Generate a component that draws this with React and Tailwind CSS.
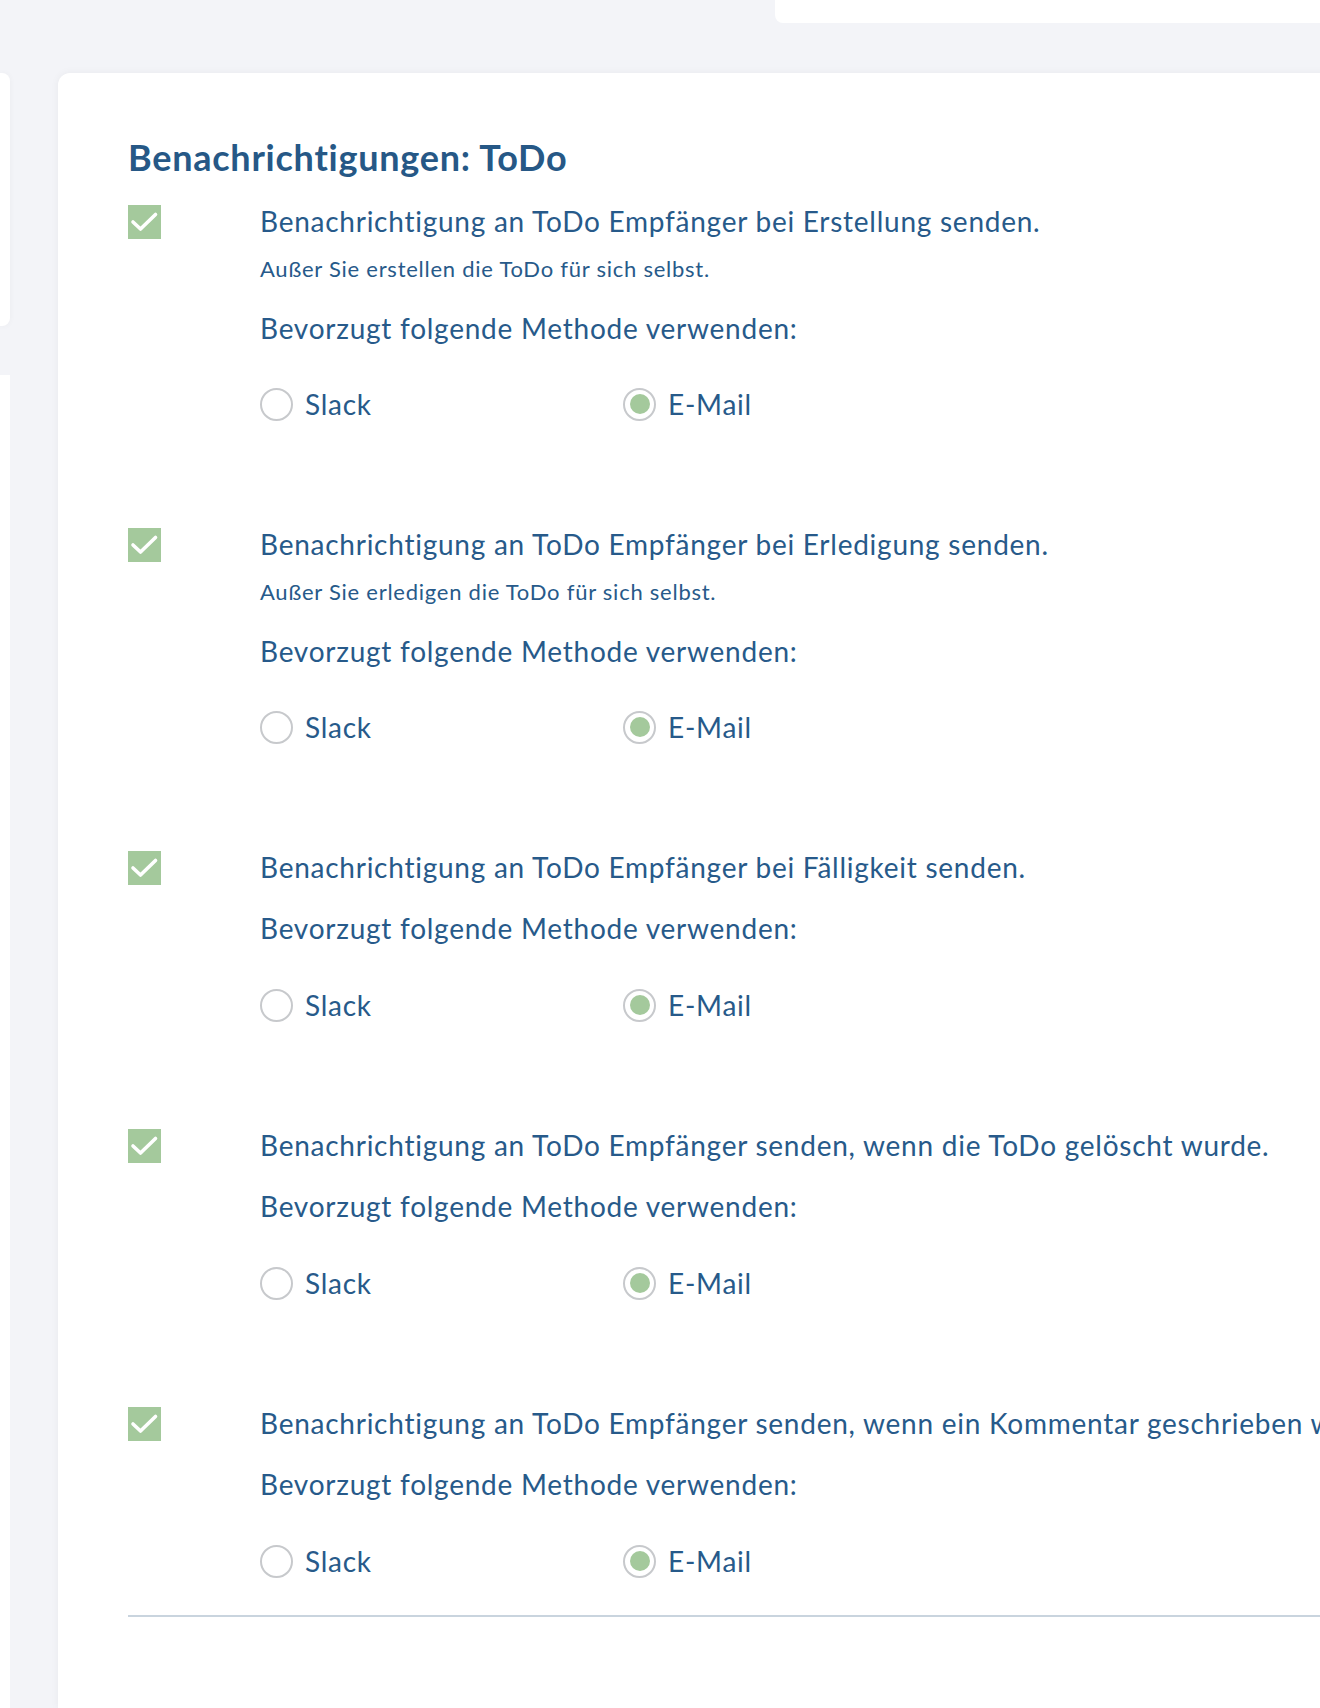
import React from "react";

const rows = [
  {
    label: "Benachrichtigung an ToDo Empfänger bei Erstellung senden.",
    sub: "Außer Sie erstellen die ToDo für sich selbst.",
  },
  {
    label: "Benachrichtigung an ToDo Empfänger bei Erledigung senden.",
    sub: "Außer Sie erledigen die ToDo für sich selbst.",
  },
  { label: "Benachrichtigung an ToDo Empfänger bei Fälligkeit senden." },
  {
    label:
      "Benachrichtigung an ToDo Empfänger senden, wenn die ToDo gelöscht wurde.",
  },
  {
    label:
      "Benachrichtigung an ToDo Empfänger senden, wenn ein Kommentar geschrieben wurde.",
  },
];

function Checkbox() {
  return (
    <div className="mt-[1px] flex h-[34px] w-[33px] shrink-0 items-center justify-center bg-[#a4c99c]">
      <svg width="33" height="34" viewBox="0 0 33 34" fill="none">
        <path
          d="M5 17 L12.5 24 L27.5 9.5"
          stroke="white"
          strokeWidth="3.6"
          strokeLinecap="round"
          strokeLinejoin="round"
        />
      </svg>
    </div>
  );
}

function Radio({ checked, label, wide }) {
  return (
    <div className={"flex items-center " + (wide ? "w-[363px]" : "")}>
      <div className="flex h-[33px] w-[33px] shrink-0 items-center justify-center rounded-full border-2 border-[#c7c9cc] bg-white">
        {checked && <div className="h-[20px] w-[20px] rounded-full bg-[#a4c99c]" />}
      </div>
      <span className="ml-[12px] text-[28px] leading-[34px]">{label}</span>
    </div>
  );
}

function Row({ label, sub }) {
  return (
    <div className="flex items-start">
      <Checkbox />
      <div className="ml-[99px] flex flex-col whitespace-nowrap">
        <div className="text-[28px] leading-[34px]">{label}</div>
        {sub && (
          <div className="mt-[18px] text-[22px] leading-[26px]">{sub}</div>
        )}
        <div
          className={
            "text-[28px] leading-[34px] " + (sub ? "mt-[29px]" : "mt-[27px]")
          }
        >
          Bevorzugt folgende Methode verwenden:
        </div>
        <div className={"flex " + (sub ? "mt-[42px]" : "mt-[43px]")}>
          <Radio label="Slack" wide />
          <Radio label="E-Mail" checked />
        </div>
      </div>
    </div>
  );
}

export default function App() {
  return (
    <div className="min-h-[1708px] w-[1320px] overflow-hidden bg-[#f3f4f8] font-['Lato',sans-serif] tracking-[0.75px] text-[#275a8a]">
      <div className="flex h-[73px]">
        <div className="ml-[775px] h-[23px] flex-1 rounded-bl-lg bg-white" />
      </div>
      <div className="flex">
        <div className="flex w-[10px] shrink-0 flex-col">
          <div className="h-[253px] rounded-r-lg bg-white shadow-[0_0_6px_rgba(0,0,0,0.04)]" />
          <div className="mt-[49px] flex-1 bg-white" />
        </div>
        <div className="ml-[48px] mr-[-40px] min-h-[1635px] flex-1 overflow-hidden rounded-tl-xl bg-white pl-[70px] pt-[63px] shadow-[0_0_8px_rgba(0,0,0,0.05)]">
          <h2 className="text-[36px] font-bold leading-[43px] text-[#265886]">
            Benachrichtigungen: ToDo
          </h2>
          <div className="mt-[25px] flex flex-col gap-[106px]">
            {rows.map((r, i) => (
              <Row key={i} label={r.label} sub={r.sub} />
            ))}
          </div>
          <div className="mt-[37px] h-[2px] bg-[#c9d4de]" />
        </div>
      </div>
    </div>
  );
}
